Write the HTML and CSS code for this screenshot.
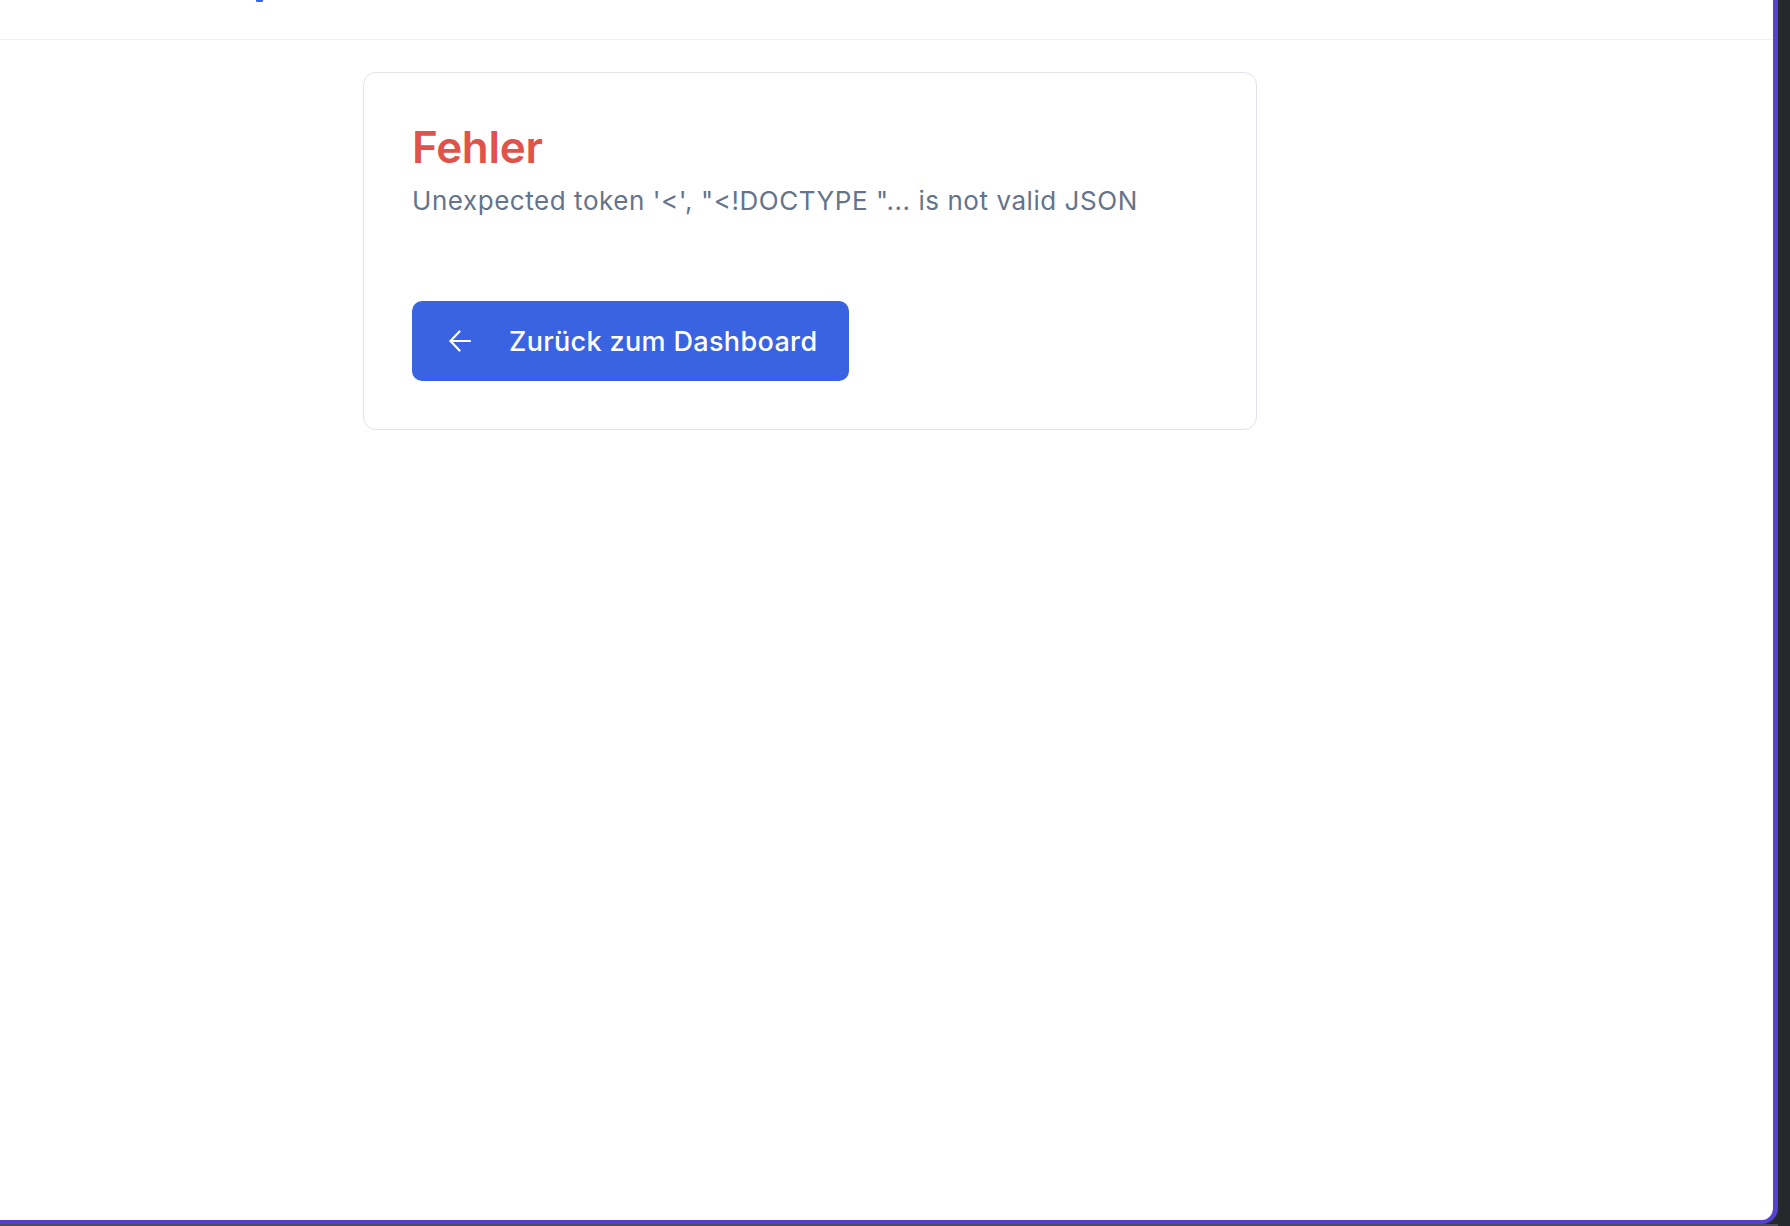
FILE: index.html
```html
<!DOCTYPE html>
<html lang="de">
<head>
<meta charset="utf-8">
<title>Fehler</title>
<link rel="stylesheet" href="styles.css">
</head>
<body>
<div class="screen">
  <div class="window">
    <header class="topbar">
      <span class="topbar-mark"></span>
    </header>
    <main class="main">
      <section class="card">
        <h1 class="card-title">Fehler</h1>
        <p class="card-text">Unexpected token '&lt;', "&lt;!DOCTYPE "... is not valid JSON</p>
        <button class="back-btn" type="button">
          <svg class="back-icon" viewBox="0 0 22 22" width="22" height="22" fill="none" stroke="currentColor" stroke-width="2.2" stroke-linecap="round" stroke-linejoin="round"><path d="M21 11H1.5"/><path d="M10.5 1.5L1.5 11l9 9.5"/></svg>
          <span>Zurück zum Dashboard</span>
        </button>
      </section>
    </main>
  </div>
</div>
</body>
</html>
```
FILE: styles.css
```css
html, body {
  margin: 0;
  padding: 0;
}
body {
  background: #27282c;
  font-family: Inter, "Noto Sans", "Liberation Sans", sans-serif;
  width: 1790px;
  height: 1226px;
  overflow: hidden;
}
.screen {
  height: 1224px;
  border-bottom: 2px solid #4e4e58;
  width: 1778px;
}
.window {
  width: 1773px;
  height: 1220px;
  background: #ffffff;
  border-right: 5px solid #5541cf;
  border-bottom: 4px solid #5541cf;
  border-bottom-right-radius: 16px;
  overflow: hidden;
}
.topbar {
  height: 39px;
  border-bottom: 1px solid #f0f0f7;
  display: flex;
  align-items: flex-start;
}
.topbar-mark {
  display: block;
  margin-left: 256px;
  width: 7px;
  height: 2px;
  background: #3a63e2;
  border-radius: 0 0 1px 1px;
}
.main {
  padding: 32px 0 0 363px;
}
.card {
  width: 796px;
  border: 1px solid #dfe4ec;
  border-radius: 13px;
  padding: 47px 48px 48px 48px;
  background: #fff;
}
.card-title {
  margin: 0 0 8px 0;
  font-size: 44px;
  line-height: 54px;
  font-weight: 600;
  color: #e0534b;
  letter-spacing: -0.3px;
}
.card-text {
  margin: 0 0 82px 0;
  font-size: 26px;
  line-height: 37px;
  color: #64748b;
  letter-spacing: 0.55px;
}
.back-btn {
  display: flex;
  align-items: center;
  gap: 38px;
  height: 80px;
  padding: 0 32px 0 37px;
  border: none;
  border-radius: 10px;
  background: #3a63e2;
  color: #ffffff;
  font-family: inherit;
  font-size: 27px;
  font-weight: 500;
  letter-spacing: 0.35px;
}
.back-icon {
  display: block;
  flex: none;
}
```
